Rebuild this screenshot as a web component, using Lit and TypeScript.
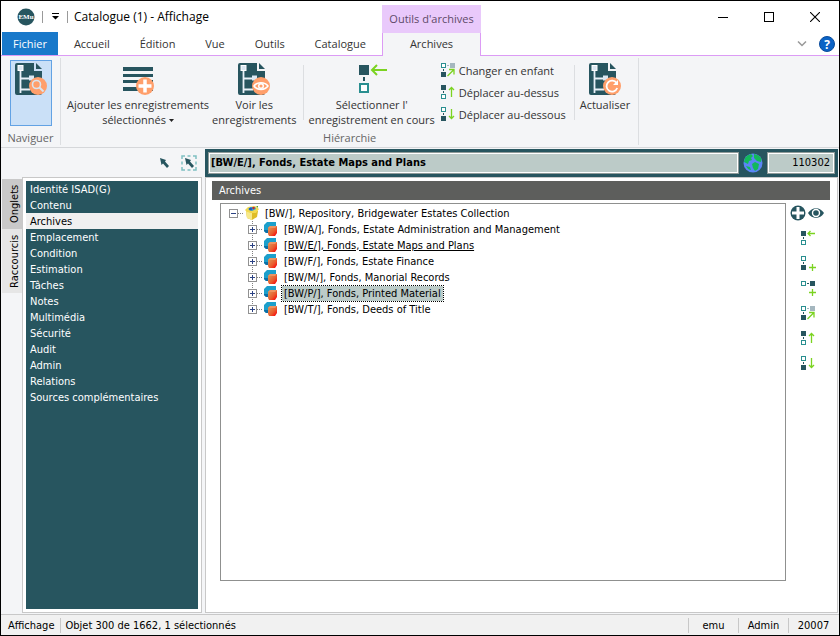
import { LitElement, html, css, svg } from "lit";
import { customElement, state } from "lit/decorators.js";
import { classMap } from "lit/directives/class-map.js";

const DARK = "#27555f";
const TEAL = "#2a8f90";
const LIME = "#7bd321";
const ORANGE = "#ff9f6b";
const SKY = "#a5b7bf";

/* Small 16px hierarchy glyphs */
const solid = (x: number, y: number, c = DARK) => svg`<rect x=${x} y=${y} width="5" height="5" fill=${c} />`;
const hollow = (x: number, y: number) =>
  svg`<rect x=${x + 0.5} y=${y + 0.5} width="4" height="4" fill="#fff" stroke=${TEAL} />`;
const vdash = svg`<rect x="2" y="6" width="1" height="2" fill=${DARK} />`;
const green = (d: string) => svg`<path d=${d} fill="none" stroke=${LIME} stroke-width="1.3" shape-rendering="auto" />`;

const glyphs: Record<string, unknown> = {
  select: svg`${solid(0, 0)}${vdash}${hollow(0, 9)}${green("M14 2.5H7M9.5 0L7 2.5L9.5 5")}`,
  addBelow: svg`${hollow(0, 0)}${vdash}${solid(0, 9)}${green("M11.5 8V15M8 11.5H15")}`,
  addSide: svg`${hollow(0, 0)}<rect x="6" y="2" width="2" height="1" fill=${DARK} />${solid(9, 0)}${green("M11.5 8V15M8 11.5H15")}`,
  child: svg`${hollow(0, 0)}<rect x="6" y="2" width="2" height="1" fill=${SKY} />${solid(9, 0, SKY)}${vdash}${solid(0, 9)}${green("M6.5 13L13 6.5M8 6.5H13V11.5")}`,
  up: svg`${solid(0, 0)}${vdash}${hollow(0, 9)}${green("M10.5 12V2.5M8 5L10.5 2.5L13 5")}`,
  down: svg`${hollow(0, 0)}${vdash}${solid(0, 9)}${green("M10.5 2V11.5M8 9L10.5 11.5L13 9")}`,
};

const glyph = (name: string) => html`
  <svg class="glyph" width="16" height="16" viewBox="0 -1 16 16" shape-rendering="crispEdges" aria-hidden="true">${glyphs[name]}</svg>`;

/* Large 32px ribbon icons */
const badges: Record<string, unknown> = {
  search: svg`<circle cx="23" cy="23" r="9" fill=${ORANGE} />
    <circle cx="21.5" cy="21.5" r="4" fill="none" stroke="#dbe4ee" stroke-width="1.6" />
    <path d="M24.5 24.5L28.5 28.5" stroke="#dbe4ee" stroke-width="2" />`,
  eye: svg`<circle cx="23" cy="23" r="9" fill=${ORANGE} />
    <path d="M16 23C19 18.5 27 18.5 30 23C27 27.5 19 27.5 16 23Z" fill="none" stroke="#fff" stroke-width="1.5" />
    <circle cx="23" cy="23" r="2.3" fill="none" stroke="#fff" stroke-width="1.4" />`,
  reload: svg`<circle cx="23" cy="23" r="9" fill=${ORANGE} />
    <path d="M27.6 20A5.5 5.5 0 1 0 28.2 25" fill="none" stroke="#fff" stroke-width="1.8" />
    <path d="M29 17V22H24Z" fill="#fff" />`,
};

const docIcon = (badge: string) => html`
  <svg class="big" width="32" height="32" viewBox="0 0 32 32" aria-hidden="true">
    <path d="M2 0H19V8H27V30Q27 32 25 32H2Q0 32 0 30V2Q0 0 2 0Z" fill=${DARK} />
    <path d="M21 0L27 6H21Z" fill=${DARK} />
    <path d="M5.5 8V30M5.5 15.5H14M5.5 26.5H15" fill="none" stroke="#e9f1f8" stroke-width="1.8" />
    <rect x="3" y="2.5" width="5" height="5" fill="#dbe8f3" stroke="#fff" />
    <rect x="14" y="12.5" width="5" height="5" fill="#dbe8f3" />
    ${badges[badge]}
  </svg>`;

const addIcon = html`
  <svg class="big" width="32" height="32" viewBox="0 0 32 32" aria-hidden="true">
    <path d="M1 4H31V8H1ZM1 11H31V14H1ZM1 17H31V20H1ZM1 24H31V28H1Z" fill=${DARK} />
    <circle cx="23" cy="23" r="9" fill=${ORANGE} />
    <path d="M23 16.5V29.5M16.5 23H29.5" stroke="#fff" stroke-width="3.5" />
  </svg>`;

const hierarchyIcon = html`
  <svg class="big" width="32" height="32" viewBox="0 0 32 32" aria-hidden="true">
    <rect x="3" y="2" width="10" height="10" fill=${DARK} />
    <rect x="7" y="14" width="2" height="4" fill=${DARK} />
    <rect x="4" y="21" width="8" height="8" fill="#fff" stroke=${TEAL} stroke-width="2" />
    <path d="M31 7H16M21 2L16 7L21 12" fill="none" stroke=${LIME} stroke-width="2" />
  </svg>`;

const cubeIcon = html`
  <svg class="node-icon" width="16" height="16" viewBox="0 0 16 16" aria-hidden="true">
    <defs>
      <linearGradient id="front" x1="0" y1="0" x2="1" y2="1">
        <stop offset="0.2" stop-color="#e08a4e" /><stop offset="0.6" stop-color="#ea5a2c" /><stop offset="0.9" stop-color="#f80d0d" />
      </linearGradient>
    </defs>
    <path d="M4 1H13V9L9 12H3L1 10V4Z" fill="#1c9fcb" />
    <path d="M1 9H6V12H3L1 10Z" fill="#0b6fa6" />
    <path d="M5 7L7 5H14V12L12 15H6L5 13Z" fill="url(#front)" />
    <path d="M5 7L7 5H14L12 7Z" fill="#ef9360" />
  </svg>`;

const boxIcon = html`
  <svg class="node-icon" width="16" height="16" viewBox="0 0 16 16" aria-hidden="true">
    <path d="M2 6H14L13 12L8 15L3 13Z" fill="#dfbd27" />
    <path d="M2 6L8 8V15L3 13Z" fill="#f7e98a" />
    <path d="M1 5L4 2L11 1L15 4L12 8L8 8L3 7Z" fill="#f2d94f" />
    <path d="M4 4L7 2H11L12 4L8 6Z" fill="#2f9fd0" />
    <circle cx="6.5" cy="4" r="1.5" fill="#1c56c4" /><circle cx="9.5" cy="3" r="1.2" fill="#d8261c" />
    <path d="M12 1H14V3Z" fill="#5aa02c" />
  </svg>`;

const globeIcon = html`
  <svg width="20" height="20" viewBox="0 0 20 20" aria-hidden="true">
    <circle cx="10" cy="10" r="9.5" fill="#5b86f5" />
    <path d="M2 5Q4 2 8 1L10 3L8 5L9 7L6 8L5 11L1 9ZM11 1Q17 2 18.5 6L18 9L14 8L11 5ZM9 11L12 9L16 11L15 16L12 18L10 15ZM3 13L7 14L8 17Q5 17 3 13Z" fill="#12b95a" />
  </svg>`;

interface TreeNode { label: string; current?: boolean; selected?: boolean }

const records: TreeNode[] = [
  { label: "[BW/A/], Fonds, Estate Administration and Management" },
  { label: "[BW/E/], Fonds, Estate Maps and Plans", current: true },
  { label: "[BW/F/], Fonds, Estate Finance" },
  { label: "[BW/M/], Fonds, Manorial Records" },
  { label: "[BW/P/], Fonds, Printed Material", selected: true },
  { label: "[BW/T/], Fonds, Deeds of Title" },
];

const base = css`
  * { box-sizing: border-box; }
  button {
    font: inherit; color: inherit; background: none; border: 0; padding: 0; margin: 0;
    text-align: inherit; cursor: default;
  }
  ul { list-style: none; margin: 0; padding: 0; }
  svg { display: block; flex: none; }
`;

@customElement("emu-title-bar")
export class EmuTitleBar extends LitElement {
  static styles = [base, css`
    :host { display: flex; height: 31px; align-items: center; padding: 0 19px 0 16px; background: #fff; }
    .rule { width: 1px; height: 12px; background: #9a9a9a; }
    .logo { margin-right: 7px; }
    .more { width: 24px; display: flex; justify-content: center; }
    h1 { flex: 1; margin: 0 0 0 6px; font: 12px/16px "Open Sans", sans-serif; color: #000; white-space: nowrap; }
    .window { display: flex; gap: 36px; }
  `];
  render() {
    return html`
      <svg class="logo" width="18" height="18" viewBox="0 0 18 18" aria-hidden="true">
        <circle cx="9" cy="9" r="8.5" fill=${DARK} />
        <text x="9" y="11" text-anchor="middle" font-family="Liberation Serif" font-weight="bold" font-size="7" fill="#fff">EMu</text>
      </svg>
      <span class="rule"></span>
      <button class="more" aria-label="Personnaliser">
        <svg width="7" height="7" viewBox="0 0 7 7"><path d="M0 0H7V1H0ZM0 3H7L3.5 6.5Z" fill="#000" /></svg>
      </button>
      <span class="rule"></span>
      <h1>Catalogue (1) - Affichage</h1>
      <div class="window">
        <button aria-label="Réduire"><svg width="10" height="10" viewBox="0 0 10 10"><path d="M0 5H10V6H0Z" /></svg></button>
        <button aria-label="Agrandir"><svg width="10" height="10" viewBox="0 0 10 10"><rect x=".5" y=".5" width="9" height="9" fill="none" stroke="#000" /></svg></button>
        <button aria-label="Fermer"><svg width="10" height="10" viewBox="0 0 10 10"><path d="M0 0L10 10M10 0L0 10" stroke="#000" stroke-width="1.1" /></svg></button>
      </div>`;
  }
}

@customElement("emu-ribbon")
export class EmuRibbon extends LitElement {
  static styles = [base, css`
    :host { display: block; font: 11px/15px "Open Sans", sans-serif; color: #333; background: #f4f5f7; border-bottom: 1px solid #d5d7da; }
    .tabs { display: flex; height: 24px; padding-left: 1px; background: #fff; border-bottom: 1px solid #dc9bf5; }
    .main { display: flex; flex: none; justify-content: space-between; width: 378px; }
    .tab { flex: none; height: 23px; padding: 0 14px; white-space: nowrap; text-align: center; }
    .file { width: 56px; padding: 0; background: #1979ca; color: #fff; }
    .context { position: relative; width: 99px; height: 24px; margin-left: 2px; padding: 0 0 2px; background: #f4f5f7; border: 1px solid #dc9bf5; border-bottom: 0; }
    .caption { position: absolute; left: -1px; right: -1px; bottom: 100%; height: 28px; line-height: 28px; background: #e9c9fb; color: #5e4a68; }
    .tools { display: flex; align-items: center; gap: 12px; margin-left: auto; padding-right: 4px; }
    .panel { display: flex; height: 91px; padding-top: 2px; }
    .group { display: flex; flex-direction: column; height: 87px; border-right: 1px solid #dcdee1; }
    .items { display: flex; flex: 1; gap: 3px; padding: 0 8px 0 6px; }
    .label { height: 16px; line-height: 18px; text-align: center; color: #666; }
    .cmd { display: flex; flex-direction: column; align-items: center; gap: 2px; padding-top: 5px; text-align: center; white-space: nowrap; }
    .first { padding: 2px 8px 0 9px; }
    .first .cmd { width: 42px; height: 66px; padding-top: 2px; background: #cae0f7; border: 1px solid #62a2e4; }
    .divider { width: 1px; height: 55px; margin: 7px 2px 0 3px; background: #dcdee1; }
    .stack { display: flex; flex-direction: column; padding: 1px 2px 0 3px; }
    .row { display: flex; align-items: center; gap: 2px; height: 22px; white-space: nowrap; }
    .caret { display: inline-block; vertical-align: 2px; }
  `];
  render() {
    return html`
      <nav class="tabs">
        <div class="main">
          <button class="tab file">Fichier</button>
          ${["Accueil", "Édition", "Vue", "Outils", "Catalogue"].map((t) => html`<button class="tab">${t}</button>`)}
        </div>
        <button class="tab context"><span class="caption">Outils d'archives</span>Archives</button>
        <div class="tools">
          <button aria-label="Réduire le ruban"><svg width="10" height="6" viewBox="0 0 10 6"><path d="M1 .5L5 4.5L9 .5" fill="none" stroke="#999" stroke-width="1.5" /></svg></button>
          <button aria-label="Aide">
            <svg width="16" height="16" viewBox="0 0 16 16"><circle cx="8" cy="8" r="7.5" fill="#0b63c5" stroke="#0a4c9c" />
              <text x="8" y="12.5" text-anchor="middle" font-family="Open Sans" font-weight="bold" font-size="12" fill="#fff">?</text></svg>
          </button>
        </div>
      </nav>
      <div class="panel">
        <section class="group">
          <div class="items first"><button class="cmd" aria-label="Naviguer">${docIcon("search")}</button></div>
          <div class="label">Naviguer</div>
        </section>
        <section class="group">
          <div class="items">
            <button class="cmd">${addIcon}<span>Ajouter les enregistrements<br />sélectionnés
              <svg class="caret" width="5" height="3" viewBox="0 0 5 3"><path d="M0 0H5L2.5 3Z" fill="#222" /></svg></span></button>
            <button class="cmd">${docIcon("eye")}<span>Voir les<br />enregistrements</span></button>
            <span class="divider"></span>
            <button class="cmd">${hierarchyIcon}<span>Sélectionner l'<br />enregistrement en cours</span></button>
            <div class="stack">
              <button class="row">${glyph("child")}Changer en enfant</button>
              <button class="row">${glyph("up")}Déplacer au-dessus</button>
              <button class="row">${glyph("down")}Déplacer au-dessous</button>
            </div>
            <span class="divider"></span>
            <button class="cmd">${docIcon("reload")}<span>Actualiser</span></button>
          </div>
          <div class="label">Hiérarchie</div>
        </section>
      </div>`;
  }
}

@customElement("emu-sidebar")
export class EmuSidebar extends LitElement {
  @state() active = "Archives";
  static styles = [base, css`
    :host { display: flex; flex-direction: column; width: 200px; flex: none; }
    .bar { display: flex; align-items: center; justify-content: flex-end; gap: 9px; height: 29px; padding-right: 5px; }
    .body { display: flex; flex: 1; }
    .side { width: 20px; padding-top: 2px; display: flex; flex-direction: column; }
    .side button { writing-mode: vertical-rl; transform: rotate(180deg); width: 20px; height: 64px; line-height: 14px; padding-right: 6px; text-align: center; background: #e6e6e6; color: #000; }
    .side .on { height: 50px; background: #c9c9c9; }
    .frame { flex: 1; display: flex; padding: 3px; background: #fff; border: 1px solid #c8c8c8; }
    ul { flex: 1; background: #27555f; color: #fff; }
    li button { display: block; width: 100%; height: 16px; line-height: 16px; padding: 1px 4px 0; white-space: nowrap; }
    .active { background: #f0f0f0; color: #000; }
  `];
  render() {
    const entries = ["Identité ISAD(G)", "Contenu", "Archives", "Emplacement", "Condition", "Estimation", "Tâches",
      "Notes", "Multimédia", "Sécurité", "Audit", "Admin", "Relations", "Sources complémentaires"];
    const pointer = svg`<path d="M4 3L10 5L9 6.5L13 11L11 13L7 8.5L5.5 10Z" fill=${DARK} />`;
    return html`
      <div class="bar">
        <button aria-label="Sélectionner"><svg width="16" height="16" viewBox="0 0 16 16">${pointer}</svg></button>
        <button aria-label="Sélection multiple"><svg width="16" height="16" viewBox="0 0 16 16">
          <path d="M1 4V1H4M6.5 1H9.5M12 1H15V4M15 6.5V9.5M15 12V15H12M9.5 15H6.5M4 15H1V12M1 9.5V6.5" fill="none" stroke="#7fc0c2" stroke-width="1.5" />${pointer}</svg></button>
      </div>
      <div class="body">
        <div class="side"><button class="on">Onglets</button><button>Raccourcis</button></div>
        <nav class="frame"><ul>
          ${entries.map((e) => html`<li><button class=${classMap({ active: e === this.active })}
            @click=${() => (this.active = e)}>${e}</button></li>`)}
        </ul></nav>
      </div>`;
  }
}

@customElement("emu-record")
export class EmuRecord extends LitElement {
  static styles = [base, css`
    :host { display: flex; flex-direction: column; flex: 1; min-width: 0; padding-top: 1px; }
    .head { display: flex; align-items: center; gap: 4px; height: 28px; padding: 0 3px; background: #27555f; }
    input { font: inherit; color: #000; background: #bccbc8; border: 1px solid #8f9b99; outline: 1px solid #fff; outline-offset: -2px; height: 22px; padding: 0 2px 2px; min-width: 0; }
    .title { flex: 1; font-weight: bold; }
    .irn { width: 68px; text-align: right; padding-right: 4px; }
    .content { flex: 1; display: flex; flex-direction: column; gap: 3px; padding: 3px 7px 31px 6px; background: #fff; border: 1px solid #c8c8c8; }
    h2 { margin: 0; height: 19px; padding: 0 7px; font: inherit; line-height: 19px; color: #fff; background: #5d5e5c; }
    .split { flex: 1; display: flex; gap: 4px; padding-left: 8px; }
    .tree { flex: 1; padding: 1px 0 0 8px; border: 1px solid #8f908f; }
    .item { display: flex; align-items: center; height: 16px; }
    .branch { margin-left: 19px; background: repeating-linear-gradient(#808080 0 1px, #fff 1px 2px) 4px 0 / 1px calc(100% - 8px) no-repeat; }
    .toggle { width: 9px; height: 9px; background: #fff; border: 1px solid #919191; }
    .dots { width: 5px; height: 1px; margin-right: 1px; background: repeating-linear-gradient(90deg, #808080 0 1px, #fff 1px 2px); }
    .text { margin-left: 3px; height: 15px; line-height: 16px; padding: 0 2px; color: #000; white-space: nowrap; }
    .current { text-decoration: underline; }
    .selected { background: #bccbc8; outline: 1px dotted #000; }
    .actions { display: flex; flex-direction: column; gap: 9px; width: 40px; }
    .pair { display: flex; align-items: center; gap: 2px; height: 18px; padding-top: 2px; }
    .actions .step { height: 16px; padding-left: 11px; }
  `];
  toggle(open: boolean) {
    return html`<button class="toggle" aria-label=${open ? "Fermer" : "Ouvrir"}><svg width="7" height="7" viewBox="0 0 7 7">
      <path d=${open ? "M1 3H6V4H1Z" : "M1 3H6V4H1ZM3 1H4V6H3Z"} fill="#2c4384" shape-rendering="crispEdges" /></svg></button><span class="dots"></span>`;
  }
  render() {
    return html`
      <div class="head">
        <input class="title" readonly aria-label="Notice" .value=${"[BW/E/], Fonds, Estate Maps and Plans"} />
        ${globeIcon}
        <input class="irn" readonly aria-label="IRN" .value=${"110302"} />
      </div>
      <div class="content">
        <h2>Archives</h2>
        <div class="split">
          <ul class="tree">
            <li>
              <div class="item">${this.toggle(true)}${boxIcon}<span class="text">[BW/], Repository, Bridgewater Estates Collection</span></div>
              <ul class="branch">
                ${records.map((r) => html`<li class="item">${this.toggle(false)}${cubeIcon}
                  <span class=${classMap({ text: true, current: !!r.current, selected: !!r.selected })}>${r.label}</span></li>`)}
              </ul>
            </li>
          </ul>
          <div class="actions">
            <div class="pair">
              <button aria-label="Ajouter"><svg width="16" height="16" viewBox="0 0 16 16"><circle cx="8" cy="8" r="7.5" fill=${DARK} /><path d="M8 2V14M2 8H14" stroke="#fff" stroke-width="3" /></svg></button>
              <button aria-label="Voir"><svg width="16" height="12" viewBox="0 0 16 12"><path d="M0 6C4-.5 12-.5 16 6C12 12.5 4 12.5 0 6Z" fill=${DARK} /><circle cx="8" cy="6" r="3.5" fill="none" stroke="#fff" stroke-width="1.4" /></svg></button>
            </div>
            ${[["select", "Sélectionner"], ["addBelow", "Ajouter un frère"], ["addSide", "Ajouter un enfant"],
              ["child", "Changer en enfant"], ["up", "Déplacer au-dessus"], ["down", "Déplacer au-dessous"]]
              .map(([g, l]) => html`<button class="step" aria-label=${l}>${glyph(g)}</button>`)}
          </div>
        </div>
      </div>`;
  }
}

@customElement("app-root")
export class AppRoot extends LitElement {
  static styles = [base, css`
    :host { display: flex; flex-direction: column; min-height: 100vh; box-sizing: border-box; border: 1px solid #000;
      font: 11px/16px "DejaVu Sans Condensed", "Noto Sans", sans-serif; color: #000; background: #f4f5f7; }
    main { flex: 1; display: flex; gap: 3px; padding: 0 1px; }
    footer { display: flex; align-items: center; height: 21px; margin-top: 1px; border-top: 1px solid #c8c8c8; background: #f1f1f1; padding: 1px 1px 0 7px; }
    footer span { height: 15px; line-height: 15px; padding: 0 5px; border-left: 1px solid #c8c8c8; }
    footer .view { padding: 0 5px 0 0; border: 0; }
    footer .count { flex: 1; }
    footer .cell { width: 50px; padding: 0; text-align: center; }
  `];
  render() {
    return html`
      <emu-title-bar></emu-title-bar>
      <emu-ribbon></emu-ribbon>
      <main><emu-sidebar></emu-sidebar><emu-record></emu-record></main>
      <footer>
        <span class="view">Affichage</span><span class="count">Objet 300 de 1662, 1 sélectionnés</span>
        <span class="cell">emu</span><span class="cell">Admin</span><span class="cell">20007</span>
      </footer>`;
  }
}
